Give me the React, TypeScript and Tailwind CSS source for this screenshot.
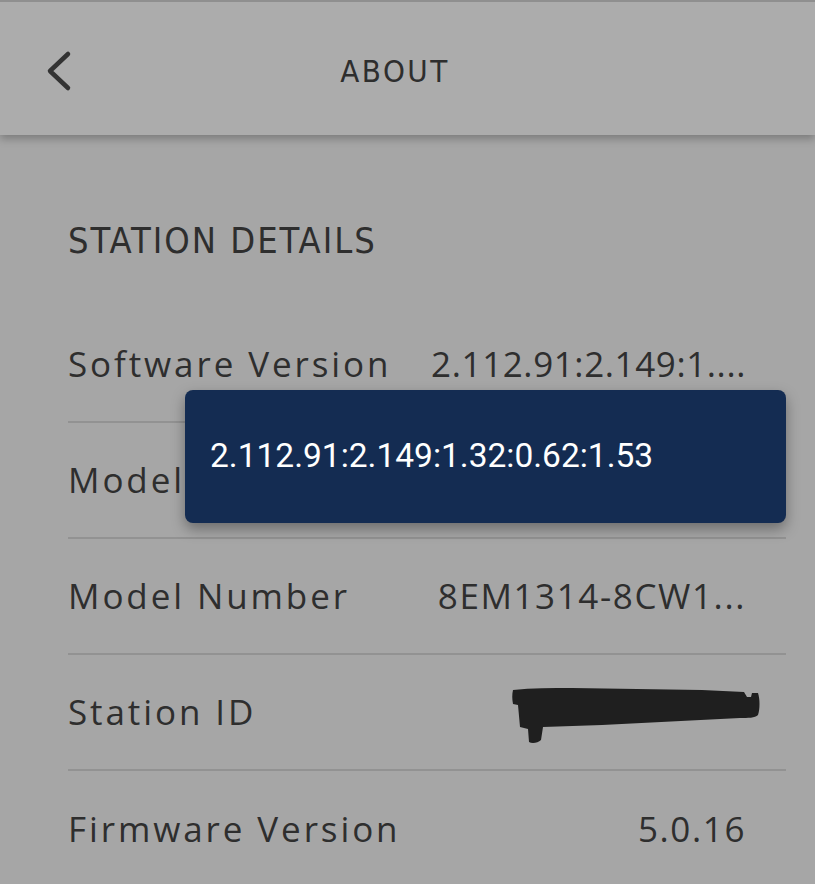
const rows = [
  { label: 'Software Version', value: '2.112.91:2.149:1....', track: 'tracking-[0.6px]' },
  { label: 'Model', value: '', track: '' },
  { label: 'Model Number', value: '8EM1314-8CW1...', track: 'tracking-[1.6px]' },
  { label: 'Station ID', value: 'redacted', track: '' },
  { label: 'Firmware Version', value: '5.0.16', track: 'tracking-[1.6px]' },
]

function Scribble() {
  return (
    <svg width="248" height="58" viewBox="0 0 248 58" className="block">
      <path
        d="M1 3 C20 1 40 1 60 1 L190 3 L232 5 L235 10 L239 10 L240 6 L246 6 C248 12 248 22 246 28 C243 31 236 31 228 31 L90 38 L31 40 L29 53 C26 56 20 57 17 55 L16 42 L8 40 L6 18 L1 17 C0 12 0 7 1 3 Z"
        fill="#1f1f1f"
      />
    </svg>
  )
}

export default function App() {
  return (
    <div className="relative h-[884px] w-[815px] overflow-hidden bg-[#a6a6a6] text-[#2b2b2b]">
      <header className="relative z-10 flex h-[135px] items-center border-t-2 border-[#8f8f8f] bg-[#acacac] shadow-[0_4px_8px_rgba(0,0,0,0.25)]">
        <div className="absolute left-[44px] top-[48px]">
          <svg width="30" height="42" viewBox="0 0 30 42" fill="none">
            <path d="M24 4 L6 21 L24 38" stroke="#333" strokeWidth="4.5" strokeLinecap="round" strokeLinejoin="round" />
          </svg>
        </div>
        <h1
          className="w-full pr-[25px] pt-[6px] text-center text-[31px] font-stretch-condensed tracking-[2.5px] text-[#2e2e2e]"
          style={{ fontFamily: '"DejaVu Sans Condensed", "DejaVu Sans", sans-serif' }}
        >
          ABOUT
        </h1>
      </header>

      <main className="pl-[68px] pr-[29px]">
        <h2
          className="mt-[82px] mb-[80px] text-[36px] leading-[48px] font-stretch-condensed tracking-[2px] text-[#2e2e2e]"
          style={{ fontFamily: '"DejaVu Sans Condensed", "DejaVu Sans", sans-serif' }}
        >
          STATION DETAILS
        </h2>
        <ul className="-mt-[38px]">
          {rows.map((r, i) => (
            <li
              key={r.label}
              className={
                'flex h-[116px] items-center justify-between ' +
                (i < rows.length - 1 ? 'border-b-2 border-[#929292]' : '')
              }
            >
              <span
                className="whitespace-nowrap text-[35px] tracking-[2.9px] text-[#2e2e2e]"
                style={{ fontFamily: '"Open Sans", sans-serif' }}
              >
                {r.label}
              </span>
              {r.value === 'redacted' ? (
                <span className="mr-[26px] mt-[8px]">
                  <Scribble />
                </span>
              ) : (
                <span
                  className={'mr-[40px] whitespace-nowrap text-right text-[35px] text-[#2e2e2e] ' + r.track}
                  style={{ fontFamily: '"Open Sans", sans-serif' }}
                >
                  {r.value}
                </span>
              )}
            </li>
          ))}
        </ul>
      </main>

      <div className="absolute left-[185px] top-[390px] z-20 flex h-[133px] w-[601px] items-center rounded-[8px] bg-[#142c52] pl-[25px] shadow-[0_6px_14px_rgba(0,0,0,0.35)]">
        <span
          className="text-[33.5px] text-white"
          style={{ fontFamily: 'Roboto, sans-serif' }}
        >
          2.112.91:2.149:1.32:0.62:1.53
        </span>
      </div>
    </div>
  )
}
